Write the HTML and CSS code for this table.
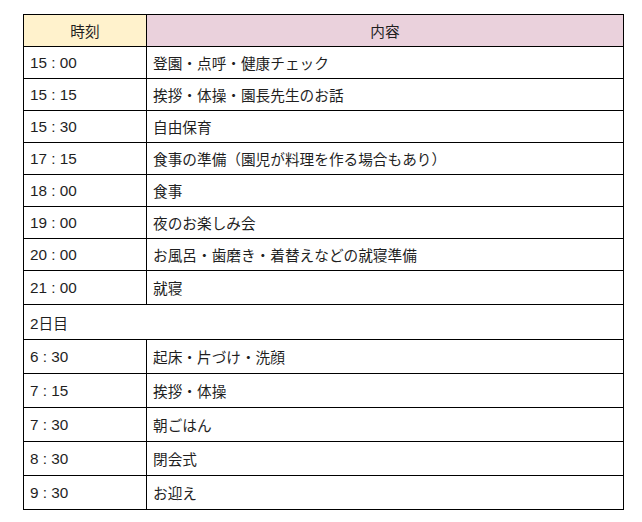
FILE: index.html
```html
<!DOCTYPE html>
<html lang="ja">
<head>
<meta charset="utf-8">
<title>スケジュール</title>
<link rel="stylesheet" href="styles.css">
</head>
<body>
<table class="schedule">
  <colgroup><col class="col-time"><col class="col-content"></colgroup>
  <thead>
    <tr class="row-head">
      <th class="head-time">時刻</th>
      <th class="head-content">内容</th>
    </tr>
  </thead>
  <tbody>
    <tr class="row-a"><td class="time">15 : 00</td><td>登園・点呼・健康チェック</td></tr>
    <tr class="row-a"><td class="time">15 : 15</td><td>挨拶・体操・園長先生のお話</td></tr>
    <tr class="row-a"><td class="time">15 : 30</td><td>自由保育</td></tr>
    <tr class="row-a"><td class="time">17 : 15</td><td>食事の準備（園児が料理を作る場合もあり）</td></tr>
    <tr class="row-a"><td class="time">18 : 00</td><td>食事</td></tr>
    <tr class="row-a"><td class="time">19 : 00</td><td>夜のお楽しみ会</td></tr>
    <tr class="row-a"><td class="time">20 : 00</td><td>お風呂・歯磨き・着替えなどの就寝準備</td></tr>
    <tr class="row-b"><td class="time">21 : 00</td><td>就寝</td></tr>
    <tr class="row-day"><td colspan="2" class="day"><span class="num">2</span>日目</td></tr>
    <tr class="row-b"><td class="time">6 : 30</td><td>起床・片づけ・洗顔</td></tr>
    <tr class="row-b"><td class="time">7 : 15</td><td>挨拶・体操</td></tr>
    <tr class="row-b"><td class="time">7 : 30</td><td>朝ごはん</td></tr>
    <tr class="row-b"><td class="time">8 : 30</td><td>閉会式</td></tr>
    <tr class="row-b"><td class="time">9 : 30</td><td>お迎え</td></tr>
  </tbody>
</table>
</body>
</html>
```
FILE: styles.css
```css
html, body {
  margin: 0;
  padding: 0;
  background: #ffffff;
}
body {
  padding: 14px 0 0 23px;
  font-family: "Liberation Sans", Arial, "Noto Sans CJK JP", sans-serif;
  font-size: 14.667px;
  color: #1f1f1f;
}
.schedule {
  border-collapse: collapse;
  width: 601px;
  table-layout: fixed;
}
.col-time { width: 123px; }
.schedule th,
.schedule td {
  border: 1px solid #000;
  padding: 0 6px;
  text-align: left;
  vertical-align: middle;
  font-weight: normal;
  white-space: nowrap;
}
.schedule th {
  text-align: center;
}
.schedule .time {
  font-size: 15.3px;
}
.day .num {
  font-size: 15.3px;
}
.head-time { background: #fff2cc; }
.head-content { background: #ead1dc; }
.row-head { height: 32px; }
.row-a { height: 32px; }
.row-b { height: 34px; }
.row-day { height: 35px; }
```
